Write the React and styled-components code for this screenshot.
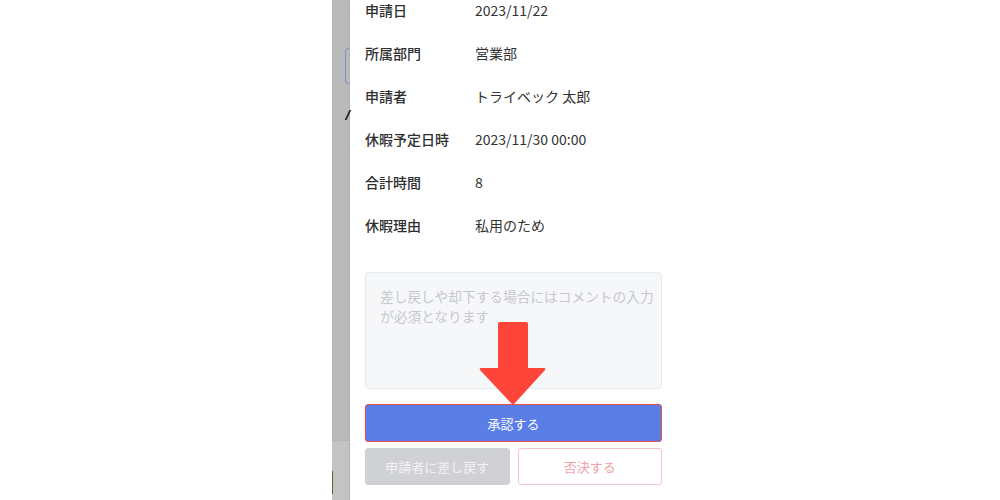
import React from 'react';
import styled, { createGlobalStyle } from 'styled-components';

const GlobalStyle = createGlobalStyle`
  html, body {
    margin: 0;
    padding: 0;
    background: #ffffff;
  }
  body {
    font-family: "Noto Sans CJK JP", "Noto Sans", sans-serif;
    color: #333333;
  }
`;

const Page = styled.div`
  width: 1000px;
  height: 500px;
  display: flex;
  overflow: hidden;
  background: #ffffff;
`;

const LeftBlank = styled.div`
  width: 332px;
  flex-shrink: 0;
`;

// dimmed backdrop showing a sliver of the page behind the drawer
const Backdrop = styled.div`
  width: 17px;
  flex-shrink: 0;
  display: flex;
  flex-direction: column;
  background: #bababa;
  border-right: 1px solid #b0b0b0;
`;

const BackdropTop = styled.div`
  flex: 1;
  display: flex;
  flex-direction: column;
  align-items: flex-end;
  padding-top: 48px;
  gap: 26px;
`;

const InputEdge = styled.div`
  width: 3px;
  height: 34px;
  border: 1px solid #7b8fd6;
  border-right: none;
  border-radius: 4px 0 0 4px;
`;

const GlyphSliver = styled.div`
  width: 2px;
  height: 10px;
  background: #2a2a2a;
  transform: skewX(-25deg);
`;

const BackdropBottom = styled.div`
  height: 60px;
  background: #c3c3c3;
  border-top: 1px solid #b5b5b5;
  display: flex;
  padding-top: 30px;
  box-sizing: border-box;
`;

const GreenEdge = styled.div`
  width: 1px;
  height: 23px;
  background: #4f6b3a;
`;

const Drawer = styled.div`
  position: relative;
  width: 330px;
  flex-shrink: 0;
  padding: 0 18px 0 15px;
  box-sizing: border-box;
  display: flex;
  flex-direction: column;
`;

const InfoList = styled.dl`
  margin: -1px 0 0;
  display: flex;
  flex-direction: column;
  gap: 21px;
`;

const Row = styled.div`
  display: flex;
  height: 22px;
  align-items: center;
  font-size: 14px;
  line-height: 22px;
`;

const Label = styled.dt`
  width: 110px;
  font-weight: 500;
  color: #2f2f2f;
`;

const Value = styled.dd`
  margin: 0;
  color: #333333;
`;

const Comment = styled.textarea`
  margin-top: 36px;
  width: 297px;
  height: 117px;
  box-sizing: border-box;
  padding: 13px 5px 13px 14px;
  border: 1px solid #e8e9ec;
  border-radius: 4px;
  background: #f6f7f9;
  font-family: inherit;
  font-size: 13.7px;
  line-height: 20px;
  resize: none;
  outline: none;
  &::placeholder {
    color: #c6c8cc;
  }
`;

const PrimaryButton = styled.button`
  margin-top: 15px;
  height: 38px;
  width: 297px;
  border: 1px solid #f04a4a;
  border-radius: 3px;
  background: #5a7de6;
  color: #ffffff;
  font-family: inherit;
  font-size: 13px;
`;

const ButtonRow = styled.div`
  margin-top: 6px;
  display: grid;
  grid-template-columns: 1fr 1fr;
  gap: 8px;
  width: 297px;
`;

const SubButton = styled.button`
  height: 37px;
  border-radius: 3px;
  font-family: inherit;
  font-size: 13px;
  border: 1px solid ${(p) => (p.$danger ? '#f6c3c6' : '#d0d1d4')};
  background: ${(p) => (p.$danger ? '#ffffff' : '#d0d1d4')};
  color: ${(p) => (p.$danger ? '#f1a3a8' : '#f3f3f5')};
`;

const Arrow = styled.svg`
  position: absolute;
  left: 128px;
  top: 321px;
`;

const rows = [
  ['申請日', '2023/11/22'],
  ['所属部門', '営業部'],
  ['申請者', 'トライベック 太郎'],
  ['休暇予定日時', '2023/11/30 00:00'],
  ['合計時間', '8'],
  ['休暇理由', '私用のため'],
];

function App() {
  return (
    <Page>
      <GlobalStyle />
      <LeftBlank />
      <Backdrop>
        <BackdropTop>
          <InputEdge />
          <GlyphSliver />
        </BackdropTop>
        <BackdropBottom>
          <GreenEdge />
        </BackdropBottom>
      </Backdrop>
      <Drawer>
        <InfoList>
          {rows.map(([k, v]) => (
            <Row key={k}>
              <Label>{k}</Label>
              <Value>{v}</Value>
            </Row>
          ))}
        </InfoList>
        <Comment placeholder="差し戻しや却下する場合にはコメントの入力が必須となります" />
        <PrimaryButton>承認する</PrimaryButton>
        <ButtonRow>
          <SubButton>申請者に差し戻す</SubButton>
          <SubButton $danger>否決する</SubButton>
        </ButtonRow>
        <Arrow width="70" height="85" viewBox="0 0 70 85">
          <path
            d="M22 1 H48 Q50 1 50 3 V47 H66 Q68 47 67 49 L36 83 Q35 84 34 83 L2 49 Q1 47 3 47 H20 V3 Q20 1 22 1 Z"
            fill="#ff4439"
          />
        </Arrow>
      </Drawer>
    </Page>
  );
}

export default App;
